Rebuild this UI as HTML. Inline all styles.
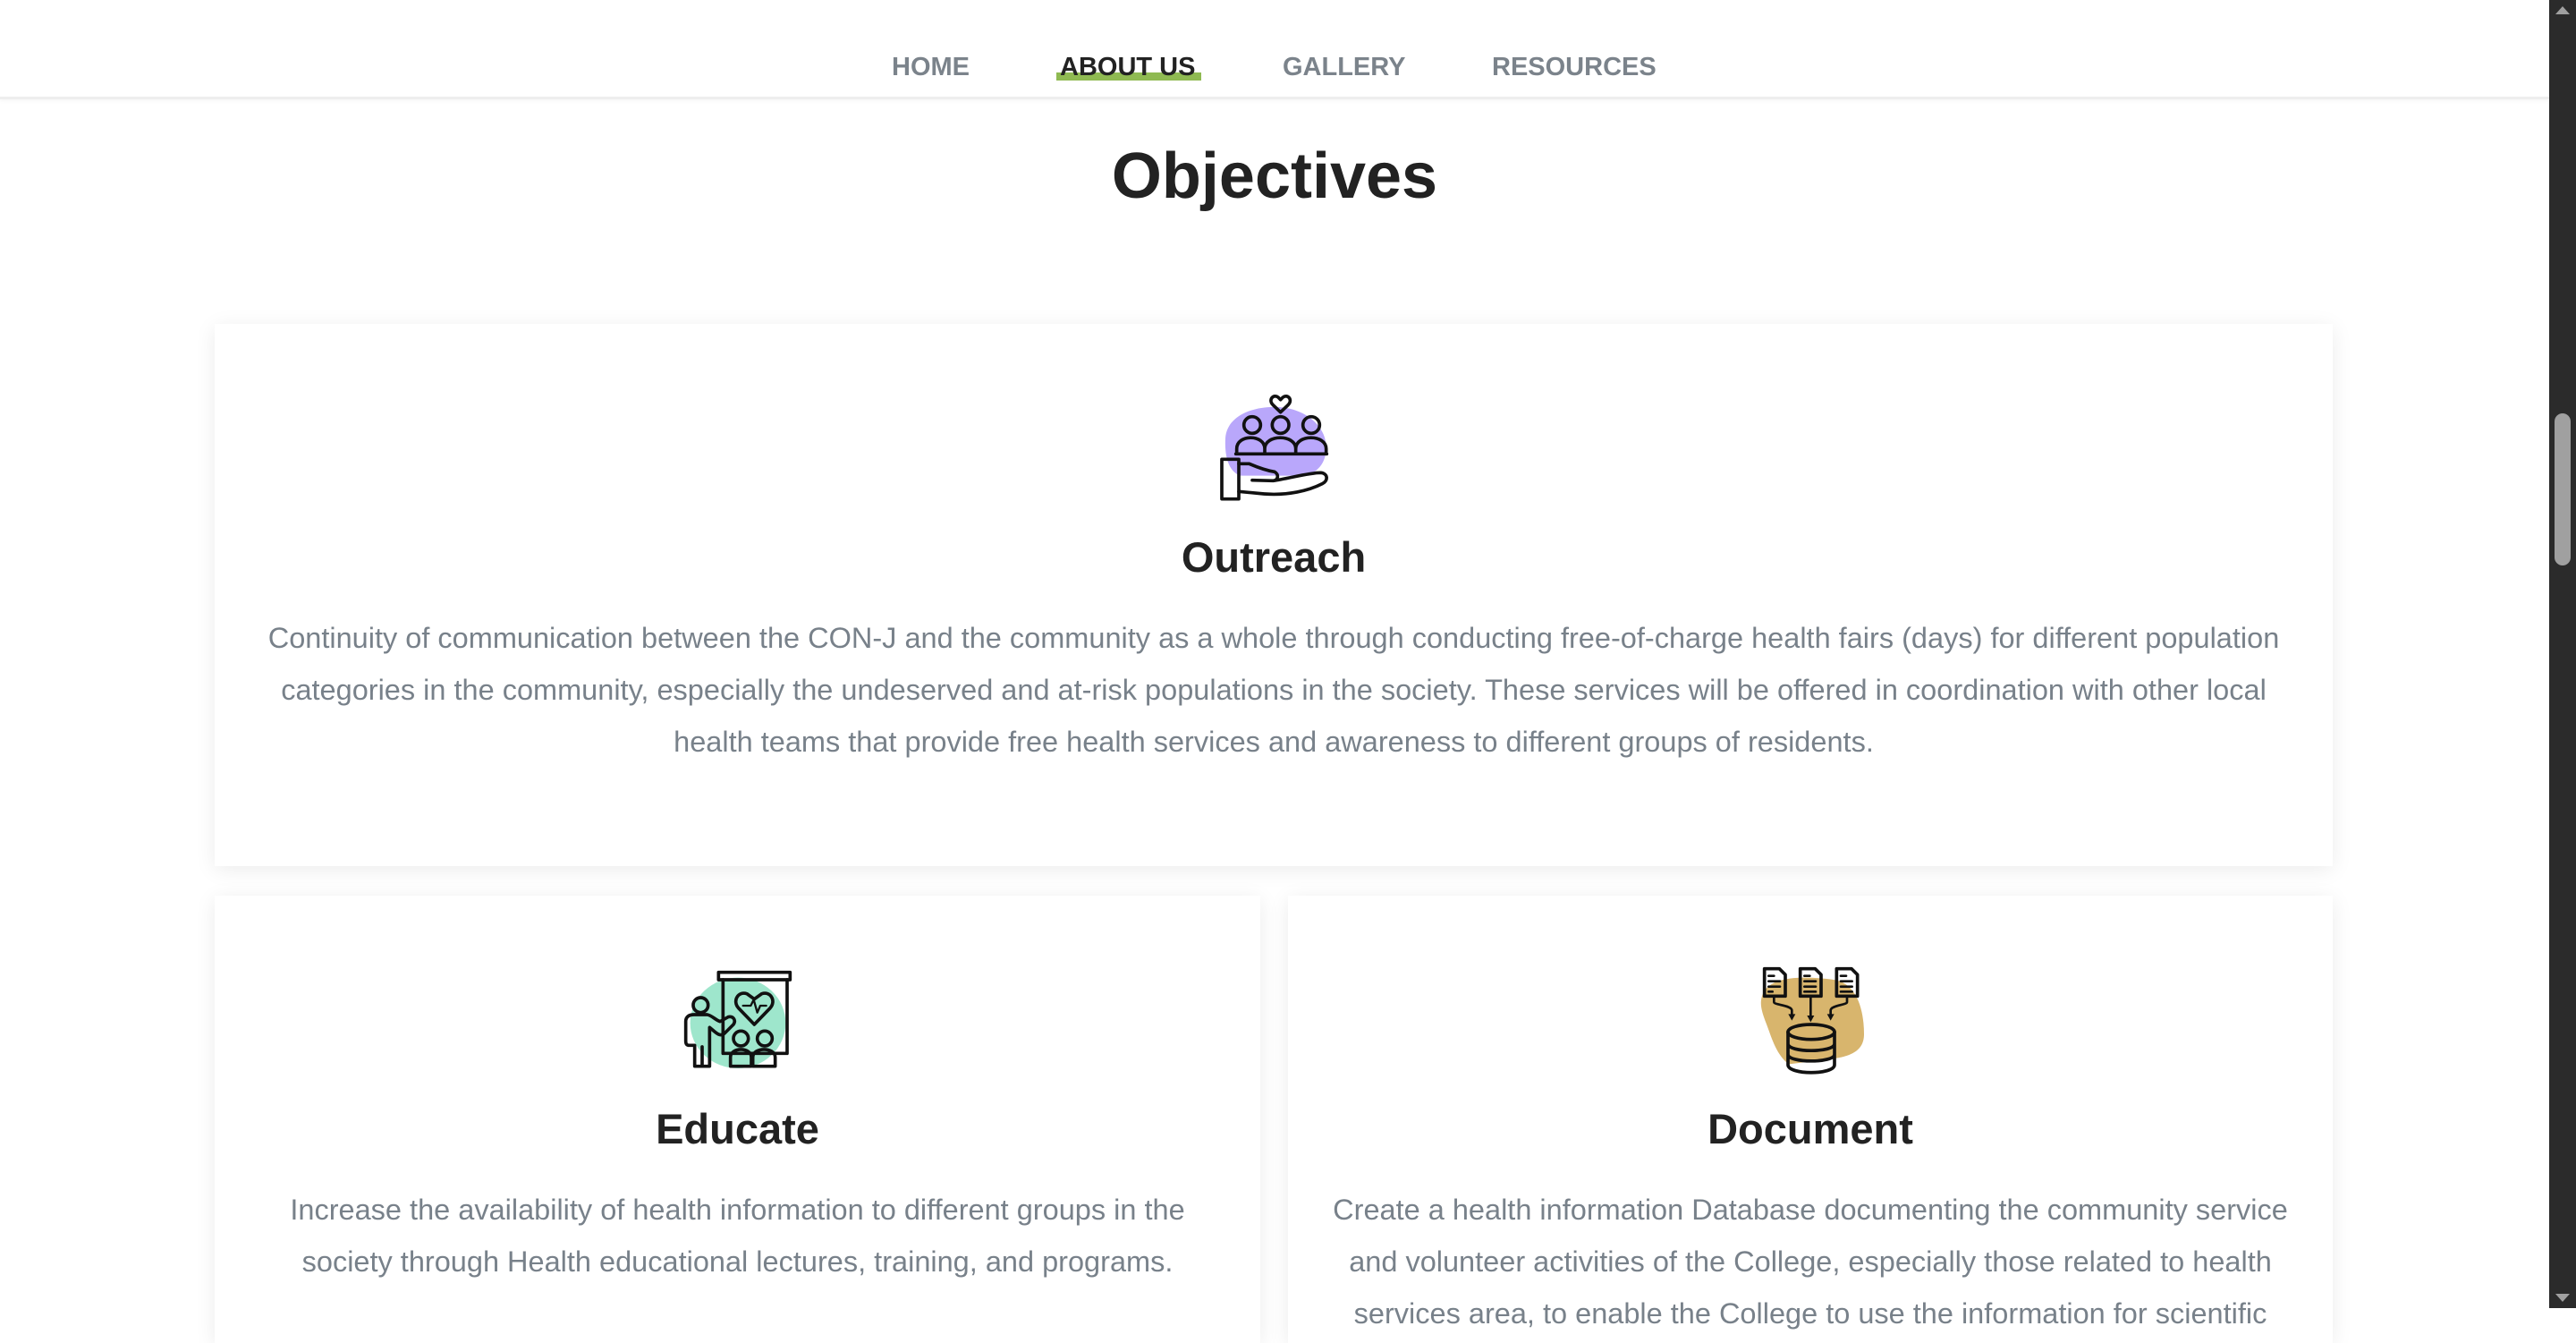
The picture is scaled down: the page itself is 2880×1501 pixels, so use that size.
<!DOCTYPE html>
<html><head><meta charset="utf-8">
<style>
html,body{margin:0;padding:0;}
body{width:2880px;height:1462px;overflow:hidden;background:#fff;position:relative;font-family:"Liberation Sans",sans-serif;}
.abs{position:absolute;}
.hdr{left:0;top:0;width:2850px;height:108px;background:#fff;border-bottom:3px solid #eee;box-shadow:0 2px 4px rgba(0,0,0,.04);z-index:2}
.nav{top:55px;font-size:29px;line-height:40px;color:#7b838b;font-weight:bold;letter-spacing:0px;white-space:nowrap}
.ul{left:1181px;top:81px;width:162px;height:9px;background:#8fba52;z-index:3}
.card{background:#fff;box-shadow:0 4px 22px rgba(0,0,0,.08);}
.t{font-weight:bold;color:#222;font-size:47px;line-height:58px;text-align:center;white-space:nowrap}
.p{color:#78818a;font-size:32.5px;line-height:58px;text-align:center;white-space:nowrap}
svg{position:absolute}
.sk{fill:none;stroke:#111;stroke-width:11;stroke-linejoin:round;stroke-linecap:round}
</style></head><body>
<div class="abs hdr"></div>
<div class="abs ul"></div>
<div class="abs nav" style="left:997px;z-index:4">HOME</div>
<div class="abs nav" style="left:1185px;color:#222;z-index:4">ABOUT US</div>
<div class="abs nav" style="left:1434px;z-index:4">GALLERY</div>
<div class="abs nav" style="left:1668px;z-index:4">RESOURCES</div>

<div class="abs" style="left:0;width:2850px;top:152px;text-align:center;font-size:72px;line-height:90px;font-weight:bold;color:#222">Objectives</div>

<div class="abs card" style="left:240px;top:362px;width:2368px;height:606px"></div>
<div class="abs card" style="left:240px;top:1001px;width:1169px;height:500px"></div>
<div class="abs card" style="left:1440px;top:1001px;width:1168px;height:500px"></div>

<!-- Outreach icon -->
<svg style="left:1330px;top:420px" width="200" height="160" viewBox="0 0 600 480">
<path d="M120,210 C125,130 220,100 300,105 C385,110 455,165 458,235 C460,300 420,330 380,335 L170,335 C130,320 117,270 120,210Z" fill="#b9a7fb"/>
<path class="sk" d="M305,122 L280,98 C262,80 282,60 297,72 L305,80 L313,72 C328,60 348,80 330,98Z"/>
<circle class="sk" cx="210" cy="165" r="28"/><circle class="sk" cx="305" cy="165" r="28"/><circle class="sk" cx="408" cy="165" r="28"/>
<path class="sk" d="M158,262 L158,245 C158,195 252,195 252,245 L252,262 M252,262 L252,245 C252,195 356,195 356,245 L356,262 M356,262 L356,245 C356,195 458,195 458,245 L458,262 M155,262 L460,262"/>
<rect class="sk" x="108" y="280" width="57" height="133" fill="#fff"/>
<path class="sk" d="M165,295 L200,295 C235,310 260,318 285,322 C300,330 298,350 280,352 L210,350 M280,352 C330,345 400,325 440,325 C465,328 465,352 445,362 C400,385 330,402 250,396 L165,388"/>
</svg>
<div class="abs t" style="left:240px;width:2368px;top:594px">Outreach</div>
<div class="abs p" style="left:240px;width:2368px;top:684px">Continuity of communication between the CON-J and the community as a whole through conducting free-of-charge health fairs (days) for different population<br>categories in the community, especially the undeserved and at-risk populations in the society. These services will be offered in coordination with other local<br>health teams that provide free health services and awareness to different groups of residents.</div>

<!-- Educate icon -->
<svg style="left:740px;top:1070px" width="160" height="140" viewBox="0 0 480 420">
<ellipse cx="255" cy="220" rx="160" ry="152" fill="#9ee6cc"/>
<path class="sk" d="M205,75 L205,322 L420,322 L420,75"/>
<rect class="sk" x="190" y="50" width="240" height="25" fill="#fff"/>
<path class="sk" d="M310,225 L257,170 C235,145 257,112 285,122 L310,140 L335,122 C363,112 385,145 363,170Z"/>
<path class="sk" style="stroke-width:7" d="M272,162 L298,162 L308,142 L320,185 L330,162 L350,162"/>
<circle class="sk" cx="130" cy="160" r="25" fill="#9ee6cc"/>
<path class="sk" d="M110,365 L110,295 L92,295 C82,295 80,290 80,280 L80,215 C80,198 92,192 108,192 L152,192 C168,195 180,210 195,215 L222,200 C238,195 250,210 240,225 L210,255 C198,265 188,258 178,250 L160,235 L160,365 Z M135,300 L135,365"/>
<circle class="sk" cx="265" cy="272" r="25" fill="#9ee6cc"/><circle class="sk" cx="345" cy="272" r="25" fill="#9ee6cc"/>
<path class="sk" d="M230,365 L230,335 C230,300 300,300 300,335 L300,365Z M305,365 L305,335 C305,300 380,300 380,335 L380,365Z" fill="#9ee6cc"/>
</svg>
<div class="abs t" style="left:240px;width:1169px;top:1233px">Educate</div>
<div class="abs p" style="left:240px;width:1169px;top:1323px">Increase the availability of health information to different groups in the<br>society through Health educational lectures, training, and programs.</div>

<!-- Document icon -->
<svg style="left:1950px;top:1070px" width="160" height="140" viewBox="0 0 480 420">
<path d="M60,130 C80,60 200,62 300,75 C375,85 402,170 402,258 C402,320 345,332 300,340 L150,358 C110,330 92,270 78,232 C62,190 50,160 60,130Z" fill="#d8b56d"/>
<path class="sk" d="M68,38 L118,38 L138,58 L138,130 L68,130Z M188,38 L238,38 L258,58 L258,130 L188,130Z" fill="#d8b56d"/>
<path class="sk" d="M310,38 L360,38 L380,58 L380,130 L310,130Z" fill="#fff"/>
<path class="sk" style="stroke-width:8" d="M82,62 L100,62 M82,80 L120,80 M82,98 L120,98 M82,115 L95,115 M202,62 L220,62 M202,80 L240,80 M202,98 L240,98 M202,115 L240,115 M324,62 L342,62 M324,80 L362,80 M324,98 L362,98 M324,115 L362,115"/>
<path class="sk" style="stroke-width:8" d="M100,132 L100,150 C100,160 160,160 160,178 L160,200 M223,132 L223,205 M345,132 L345,150 C345,160 290,160 290,178 L290,200"/>
<path d="M148,190 L172,190 L160,212Z M211,195 L235,195 L223,217Z M278,190 L302,190 L290,212Z" fill="#111"/>
<path class="sk" d="M147,250 L147,360 C147,395 303,395 303,360 L303,250 M147,290 C147,320 303,320 303,290 M147,325 C147,355 303,355 303,325"/>
<ellipse class="sk" cx="225" cy="250" rx="78" ry="25" fill="#d8b56d"/>
</svg>
<div class="abs t" style="left:1440px;width:1168px;top:1233px">Document</div>
<div class="abs p" style="left:1440px;width:1168px;top:1323px">Create a health information Database documenting the community service<br>and volunteer activities of the College, especially those related to health<br>services area, to enable the College to use the information for scientific</div>

<!-- scrollbar -->
<div class="abs" style="left:2850px;top:0;width:30px;height:1462px;background:#2b2b2b;z-index:5"></div>
<div class="abs" style="left:2856px;top:462px;width:18px;height:170px;border-radius:9px;background:#a0a0a0;z-index:6"></div>
<div class="abs" style="left:2857px;top:7px;width:0;height:0;border-left:8px solid transparent;border-right:8px solid transparent;border-bottom:9px solid #a0a0a0;z-index:6"></div>
<div class="abs" style="left:2857px;top:1446px;width:0;height:0;border-left:8px solid transparent;border-right:8px solid transparent;border-top:9px solid #a0a0a0;z-index:6"></div>
</body></html>
